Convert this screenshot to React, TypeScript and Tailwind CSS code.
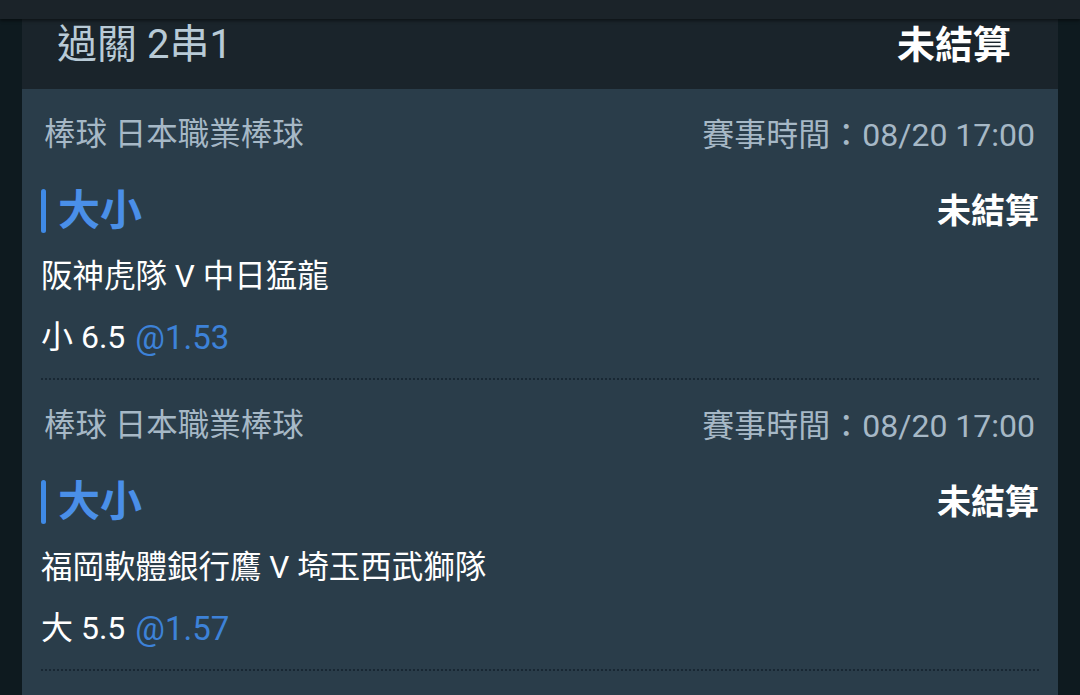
import React from "react";

const FONT = { fontFamily: "Roboto, 'Noto Sans CJK TC', 'Noto Sans', sans-serif" };

type Bet = {
  league: string;
  time: string;
  type: string;
  status: string;
  match: string;
  pick: string;
  odds: string;
};

const bets: Bet[] = [
  {
    league: "棒球 日本職業棒球",
    time: "賽事時間：08/20 17:00",
    type: "大小",
    status: "未結算",
    match: "阪神虎隊 V 中日猛龍",
    pick: "小 6.5",
    odds: "@1.53",
  },
  {
    league: "棒球 日本職業棒球",
    time: "賽事時間：08/20 17:00",
    type: "大小",
    status: "未結算",
    match: "福岡軟體銀行鷹 V 埼玉西武獅隊",
    pick: "大 5.5",
    odds: "@1.57",
  },
];

function BetItem({ bet }: { bet: Bet }) {
  return (
    <div className="flex flex-col">
      <div className="mt-[16px] h-[60px] flex items-center justify-between text-[31.5px] leading-none text-[#a6b8c6] pl-[3px] pr-[4px]">
        <span>{bet.league}</span>
        <span className="text-[32px]">{bet.time}</span>
      </div>
      <div className="mt-[16px] h-[60px] flex items-center justify-between">
        <div className="flex items-center">
          <div className="w-[5px] h-[44px] rounded-full bg-[#3f8ae6]" />
          <span className="ml-[12px] text-[42px] leading-none font-bold text-[#4a8fe8]">{bet.type}</span>
        </div>
        <span className="text-[34px] leading-none font-bold text-white">{bet.status}</span>
      </div>
      <div className="mt-[6px] h-[60px] flex items-center text-[31.5px] leading-none text-white">
        {bet.match}
      </div>
      <div className="h-[60px] flex items-center text-[32px] leading-none text-white">
        <span>{bet.pick}</span>
        <span className="ml-[10px] text-[33px] text-[#3d82d8]">{bet.odds}</span>
      </div>
      <div className="mt-[11px] h-[2px] w-full bg-[repeating-linear-gradient(90deg,#182733_0px,#182733_2px,transparent_2px,transparent_4px)]" />
    </div>
  );
}

export default function App() {
  return (
    <div className="relative w-[1080px] h-[695px] overflow-hidden bg-[#0e1a1f]" style={FONT}>
      <div className="mx-[22px] bg-[#2a3d4a] min-h-[695px]">
        <div className="h-[89px] bg-[#1a242b] flex items-center justify-between pl-[35px] pr-[47px]">
          <span className="text-[40px] leading-none text-[#b8cad6]">過關 2串1</span>
          <span className="text-[38px] leading-none font-bold text-white">未結算</span>
        </div>
        <div className="px-[19px]">
          {bets.map((b, i) => (
            <BetItem key={i} bet={b} />
          ))}
        </div>
      </div>
      <div className="absolute top-0 left-0 right-0 h-[19px] bg-[#1b2329] shadow-[0_2px_3px_rgba(0,0,0,0.45)]" />
    </div>
  );
}
